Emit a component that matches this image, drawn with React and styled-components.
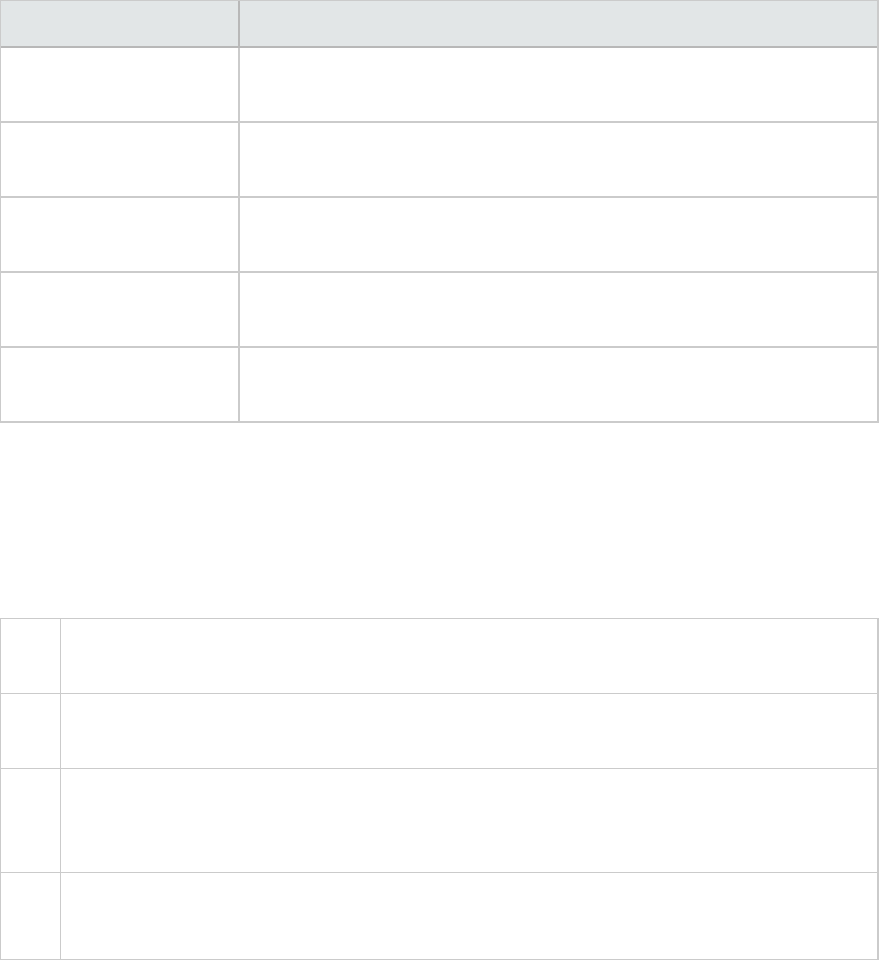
import React from 'react';
import styled, { createGlobalStyle } from 'styled-components';

const GlobalStyle = createGlobalStyle`
  html, body {
    margin: 0;
    padding: 0;
    background: #fff;
    font-family: "Liberation Sans", Arial, sans-serif;
    font-size: 14px;
    color: #333;
  }
`;

const Page = styled.div`
  display: flex;
  flex-direction: column;
  width: 879px;
`;

const Table = styled.table`
  width: 879px;
  border-collapse: separate;
  border-spacing: 0;
  table-layout: fixed;
  border-top: 1px solid #cbcbcb;
  border-left: 1px solid #cbcbcb;
  border-right: 2px solid #cbcbcb;
  margin-top: ${props => props.$offset || 0}px;
`;

const Head = styled.th`
  height: 45px;
  padding: 0;
  background: #e2e6e7;
  border-bottom: 2px solid #b8b8b8;
  border-right: ${props => props.$first ? '2px solid #b8b8b8' : 'none'};
`;

const Cell = styled.td`
  height: ${props => props.$height}px;
  padding: 0;
  border-bottom: ${props => props.$line}px solid #cbcbcb;
  border-right: ${props => props.$first ? `${props.$line}px solid #cbcbcb` : 'none'};
`;

const topRows = [73, 73, 73, 73, 73];
const bottomRows = [74, 74, 103, 86];

export default function App() {
  return (
    <Page>
      <GlobalStyle />
      <Table>
        <colgroup>
          <col style={{ width: 239 }} />
          <col />
        </colgroup>
        <thead>
          <tr>
            <Head $first />
            <Head />
          </tr>
        </thead>
        <tbody>
          {topRows.map((h, i) => (
            <tr key={i}>
              <Cell $first $height={h} $line={2} />
              <Cell $height={h} $line={2} />
            </tr>
          ))}
        </tbody>
      </Table>

      <Table $offset={195}>
        <colgroup>
          <col style={{ width: 60 }} />
          <col />
        </colgroup>
        <tbody>
          {bottomRows.map((h, i) => (
            <tr key={i}>
              <Cell $first $height={h} $line={1} />
              <Cell $height={h} $line={1} />
            </tr>
          ))}
        </tbody>
      </Table>
    </Page>
  );
}
